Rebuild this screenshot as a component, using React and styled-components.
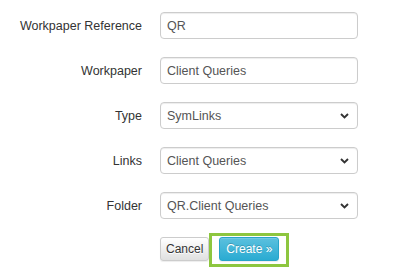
import React from "react";
import styled, { createGlobalStyle } from "styled-components";

const Global = createGlobalStyle`
  html, body { margin: 0; padding: 0; background: #fff; }
  body { font-family: "Liberation Sans", Arial, sans-serif; }
`;

const Form = styled.form`
  display: flex;
  flex-direction: column;
  gap: 18px;
  padding-top: 12px;
  width: 394px;
`;

const Row = styled.div`
  display: grid;
  grid-template-columns: 142px 198px;
  column-gap: 18px;
  align-items: center;
  height: 27px;
`;

const Label = styled.label`
  text-align: right;
  font-size: 12.5px;
  color: #333;
`;

const Field = styled.div`
  box-sizing: border-box;
  height: 27px;
  border: 1px solid #ccc;
  border-radius: 4px;
  box-shadow: inset 0 1px 1px rgba(0, 0, 0, 0.075);
  display: flex;
  align-items: center;
  justify-content: space-between;
  padding: 0 8px 0 6px;
  font-size: 12.5px;
  color: #555;
  background: #fff;
`;

const Chevron = () => (
  <svg width="9" height="6" viewBox="0 0 9 6">
    <path d="M1 1 L4.5 4.5 L8 1" fill="none" stroke="#333" strokeWidth="1.9" />
  </svg>
);

const Actions = styled.div`
  display: flex;
  align-items: flex-start;
  padding-left: 160px;
`;

const Button = styled.button`
  box-sizing: border-box;
  height: 24px;
  padding: 0 ${(p) => (p.$primary ? "6px" : "5px")};
  font-family: "Liberation Sans", Arial, sans-serif;
  font-size: 12px;
  border-radius: 3px;
  cursor: pointer;
  color: ${(p) => (p.$primary ? "#fff" : "#333")};
  border: 1px solid ${(p) => (p.$primary ? "#28a4c9" : "#ccc")};
  background: ${(p) =>
    p.$primary
      ? "linear-gradient(to bottom, #5bc0de 0%, #2aabd2 100%)"
      : "linear-gradient(to bottom, #fff 0%, #e0e0e0 100%)"};
  text-shadow: ${(p) => (p.$primary ? "0 -1px 0 rgba(0,0,0,0.2)" : "0 1px 0 #fff")};
  box-shadow: inset 0 1px 0 rgba(255, 255, 255, 0.15), 0 1px 1px rgba(0, 0, 0, 0.075);
`;

const Highlight = styled.span`
  display: inline-flex;
  margin-top: -4px;
  padding: 1px 7px 3px 7px;
  border: 3px solid #8dc63f;
`;

const rows = [
  { label: "Workpaper Reference", value: "QR" },
  { label: "Workpaper", value: "Client Queries" },
  { label: "Type", value: "SymLinks", select: true },
  { label: "Links", value: "Client Queries", select: true },
  { label: "Folder", value: "QR.Client Queries", select: true },
];

export default function App() {
  return (
    <>
      <Global />
      <Form onSubmit={(e) => e.preventDefault()}>
        {rows.map((r) => (
          <Row key={r.label}>
            <Label>{r.label}</Label>
            <Field>
              <span>{r.value}</span>
              {r.select && <Chevron />}
            </Field>
          </Row>
        ))}
        <Actions>
          <Button type="button">Cancel</Button>
          <Highlight>
            <Button type="submit" $primary>
              Create »
            </Button>
          </Highlight>
        </Actions>
      </Form>
    </>
  );
}
